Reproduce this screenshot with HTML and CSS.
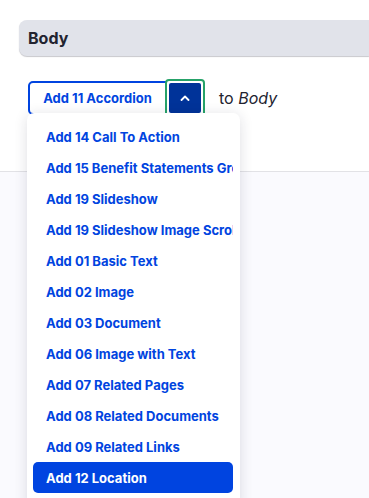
FILE: index.html
```html
<!DOCTYPE html>
<html lang="en">
<head>
    <meta charset="UTF-8">
    <title>Add block</title>
    <link rel="stylesheet" href="styles.css">
</head>
<body>
    <div class="top">
        <div class="region-bar">Body</div>

        <div class="add-row">
            <div class="split">
                <button class="main-btn">Add 11 Accordion</button>
                <span class="toggle-ring">
                    <button class="toggle-btn">
                        <svg width="10" height="6" viewBox="0 0 10 6"><path d="M1.5 5 L5 1.5 L8.5 5" fill="none" stroke="#fff" stroke-width="1.8" stroke-linecap="round" stroke-linejoin="round"/></svg>
                    </button>
                </span>
                <ul class="menu">
                    <li>Add 14 Call To Action</li>
                    <li>Add 15 Benefit Statements Group</li>
                    <li>Add 19 Slideshow</li>
                    <li>Add 19 Slideshow Image Scroller</li>
                    <li>Add 01 Basic Text</li>
                    <li>Add 02 Image</li>
                    <li>Add 03 Document</li>
                    <li>Add 06 Image with Text</li>
                    <li>Add 07 Related Pages</li>
                    <li>Add 08 Related Documents</li>
                    <li>Add 09 Related Links</li>
                    <li class="active">Add 12 Location</li>
                </ul>
            </div>
            <span class="target">to <em>Body</em></span>
        </div>
    </div>
    <div class="bottom"></div>
</body>
</html>
```

FILE: styles.css
```css
body {
    margin: 0;
    font-family: Inter, "Noto Sans", sans-serif;
    background: #fafafe;
    height: 498px;
    overflow: hidden;
}

.top {
    background: #fff;
    height: 172px;
    border-bottom: 1px solid #e2e2e6;
    padding: 20px 0 0 19px;
    box-sizing: border-box;
}

.region-bar {
    background: #e1e3ea;
    border-radius: 8px 0 0 8px;
    height: 36px;
    line-height: 36px;
    padding-left: 9px;
    font-size: 16px;
    font-weight: 700;
    color: #222330;
    box-shadow: 0 1px 1px #c8c8cc;
}

.add-row {
    display: flex;
    align-items: center;
    margin-top: 23px;
    padding-left: 9px;
}

.split {
    position: relative;
    display: flex;
    align-items: center;
}

.main-btn {
    font-family: inherit;
    font-size: 13px;
    font-weight: 700;
    color: #0044e0;
    background: #fff;
    border: 2px solid #0044e0;
    border-radius: 5px 0 0 5px;
    height: 34px;
    width: 139px;
    padding: 0;
}

.toggle-ring {
    display: flex;
    border: 2px solid #26a269;
    border-radius: 4px;
    padding: 2px;
    margin-left: -2px;
}

.toggle-btn {
    width: 32px;
    height: 30px;
    background: #003399;
    border: none;
    border-radius: 2px;
    padding: 0;
    display: flex;
    align-items: center;
    justify-content: center;
}

.target {
    margin-left: 14px;
    font-size: 16px;
    color: #222330;
}

.menu {
    position: absolute;
    top: 34px;
    left: -1px;
    width: 213px;
    height: 400px;
    margin: 0;
    padding: 8px 7px 0 6px;
    box-sizing: border-box;
    list-style: none;
    background: #fff;
    border-radius: 7px;
    box-shadow: 0 2px 14px rgba(30, 30, 60, 0.14);
    overflow: hidden;
}

.menu li {
    height: 31px;
    line-height: 32px;
    padding-left: 13px;
    font-size: 13px;
    font-weight: 700;
    color: #0044e0;
    white-space: nowrap;
    overflow: hidden;
    border-radius: 5px;
}

.menu li.active {
    background: #0044e0;
    color: #fff;
}
```
